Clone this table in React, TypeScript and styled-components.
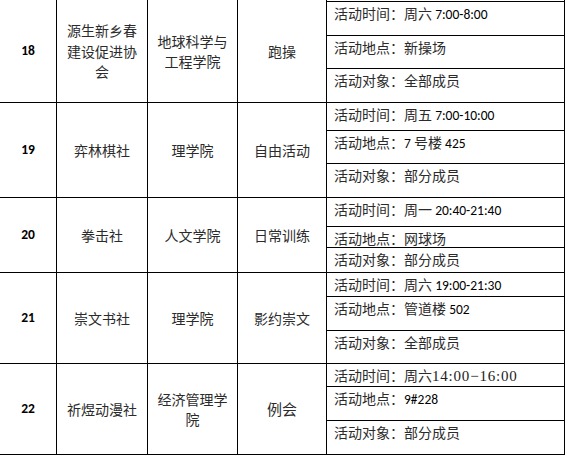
import React from "react";
import styled, { createGlobalStyle } from "styled-components";

const GlobalStyle = createGlobalStyle`
  html, body {
    margin: 0;
    padding: 0;
    background: #ffffff;
  }
  body {
    font-family: "Noto Sans CJK SC", "Noto Sans", sans-serif;
    color: #262626;
  }
`;

const Table = styled.div`
  width: 565px;
  box-sizing: border-box;
  border-right: 1px solid #000;
  display: flex;
  flex-direction: column;
`;

const Row = styled.div<{ $h: number }>`
  box-sizing: border-box;
  height: ${(p) => p.$h}px;
  border-bottom: 1px solid #000;
  display: grid;
  grid-template-columns: 57px 91px 90px 89px 1fr;
`;

const Cell = styled.div<{ $size?: number }>`
  box-sizing: border-box;
  border-right: 1px solid #000;
  display: flex;
  align-items: center;
  justify-content: center;
  text-align: center;
  padding: 0 7px;
  font-size: ${(p) => p.$size ?? 14}px;
  line-height: 20.5px;
  color: #2b2b2b;
`;

const NumCell = styled(Cell)`
  font-family: "Carlito", "Lato", "Liberation Sans", sans-serif;
  font-size: 13.5px;
  font-weight: 600;
  color: #000;
  padding: 0;
`;

const Details = styled.div<{ $top: boolean }>`
  display: flex;
  flex-direction: column;
  padding-top: ${(p) => (p.$top ? 1 : 0)}px;
`;

const Sub = styled.div<{ $h?: number; $topLine?: boolean; $last?: boolean }>`
  box-sizing: border-box;
  ${(p) => (p.$h ? `height: ${p.$h}px; flex: none;` : "flex: 1;")}
  border-top: ${(p) => (p.$topLine ? "1px solid #000" : "none")};
  border-bottom: ${(p) => (p.$last ? "none" : "1px solid #000")};
  padding: 1px 0 0 7px;
  font-size: 14px;
  line-height: 20px;
  white-space: nowrap;
  overflow: hidden;
  color: #2b2b2b;
`;

const Latin = styled.span`
  font-family: "Carlito", "Lato", "Liberation Sans", sans-serif;
  font-size: 13.5px;
  font-weight: 500;
  color: #000;
`;

const SerifRun = styled.span`
  font-family: "Liberation Serif", serif;
  font-size: 15px;
  letter-spacing: 0.8px;
  color: #222;
`;

type Seg = { t: string; k?: "l" | "s" };

type RowData = {
  no: string;
  club: string;
  college: string;
  act: string;
  actSize?: number;
  h: number;
  subs: [number, number];
  details: Seg[][];
};

const rows: RowData[] = [
  {
    no: "18",
    club: "源生新乡春建设促进协会",
    college: "地球科学与工程学院",
    act: "跑操",
    h: 103,
    subs: [35, 33],
    details: [
      [{ t: "活动时间：周六 " }, { t: "7:00-8:00", k: "l" }],
      [{ t: "活动地点：新操场" }],
      [{ t: "活动对象：全部成员" }],
    ],
  },
  {
    no: "19",
    club: "弈林棋社",
    college: "理学院",
    act: "自由活动",
    h: 95,
    subs: [28, 33],
    details: [
      [{ t: "活动时间：周五 " }, { t: "7:00-10:00", k: "l" }],
      [{ t: "活动地点：" }, { t: "7 ", k: "l" }, { t: "号楼 " }, { t: "425", k: "l" }],
      [{ t: "活动对象：部分成员" }],
    ],
  },
  {
    no: "20",
    club: "拳击社",
    college: "人文学院",
    act: "日常训练",
    h: 75,
    subs: [29, 21],
    details: [
      [{ t: "活动时间：周一 " }, { t: "20:40-21:40", k: "l" }],
      [{ t: "活动地点：网球场" }],
      [{ t: "活动对象：部分成员" }],
    ],
  },
  {
    no: "21",
    club: "崇文书社",
    college: "理学院",
    act: "影约崇文",
    h: 91,
    subs: [24, 34],
    details: [
      [{ t: "活动时间：周六 " }, { t: "19:00-21:30", k: "l" }],
      [{ t: "活动地点：管道楼 " }, { t: "502", k: "l" }],
      [{ t: "活动对象：全部成员" }],
    ],
  },
  {
    no: "22",
    club: "祈煜动漫社",
    college: "经济管理学院",
    act: "例会",
    actSize: 15,
    h: 91,
    subs: [23, 34],
    details: [
      [{ t: "活动时间：周六" }, { t: "14:00\u221216:00", k: "s" }],
      [{ t: "活动地点：" }, { t: "9#228", k: "l" }],
      [{ t: "活动对象：部分成员" }],
    ],
  },
];

const renderSeg = (s: Seg, i: number) => {
  if (s.k === "l") return <Latin key={i}>{s.t}</Latin>;
  if (s.k === "s") return <SerifRun key={i}>{s.t}</SerifRun>;
  return <React.Fragment key={i}>{s.t}</React.Fragment>;
};

export default function App() {
  return (
    <>
      <GlobalStyle />
      <Table>
        {rows.map((r, ri) => (
          <Row key={r.no} $h={r.h}>
            <NumCell>{r.no}</NumCell>
            <Cell>{r.club}</Cell>
            <Cell>{r.college}</Cell>
            <Cell $size={r.actSize}>{r.act}</Cell>
            <Details $top={ri === 0}>
              {r.details.map((d, di) => (
                <Sub
                  key={di}
                  $h={di < 2 ? r.subs[di] : undefined}
                  $topLine={ri === 0 && di === 0}
                  $last={di === 2}
                >
                  {d.map(renderSeg)}
                </Sub>
              ))}
            </Details>
          </Row>
        ))}
      </Table>
    </>
  );
}
